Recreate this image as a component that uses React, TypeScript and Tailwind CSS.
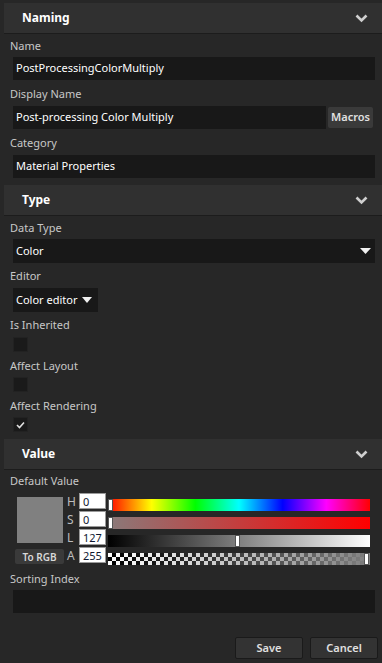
import React from "react";

const font = { fontFamily: '"Segoe UI", "Noto Sans", "Open Sans", sans-serif' };

function Chevron() {
  return (
    <svg width="13" height="9" viewBox="0 0 13 9" className="text-[#cfcfcf]">
      <path d="M1.5 1.5 L6.5 6.5 L11.5 1.5" fill="none" stroke="currentColor" strokeWidth="2.6" />
    </svg>
  );
}

function Header({ title, mt }: { title: string; mt: string }) {
  return (
    <div className={`${mt} ml-[4px] h-[31px] bg-[#303030] border-b border-[#1c1c1c] flex items-center justify-between pl-[18px] pr-[14px]`}>
      <span className="text-[12px] font-bold text-white">{title}</span>
      <Chevron />
    </div>
  );
}

function Label({ text, mt }: { text: string; mt: string }) {
  return <div className={`${mt} pl-[10px] h-[16px] leading-[15px] text-[11px] text-[#c8c8c8]`}>{text}</div>;
}

function Input({ value, mt, w = "w-[362px]" }: { value?: string; mt: string; w?: string }) {
  return (
    <div className={`${mt} ml-[13px] ${w} h-[23px] bg-[#181818] flex items-center px-[3px] text-[11px] text-white whitespace-nowrap`}>
      {value}
    </div>
  );
}

function Checkbox({ checked, mt }: { checked?: boolean; mt: string }) {
  return (
    <div className={`${mt} ml-[13px] w-[15px] h-[15px] bg-[#1a1a1a] border border-[#222] flex items-center justify-center`}>
      {checked && (
        <svg width="9" height="8" viewBox="0 0 9 8">
          <path d="M1 4 L3.5 6.5 L8 1.5" fill="none" stroke="#e0e0e0" strokeWidth="1.6" />
        </svg>
      )}
    </div>
  );
}

function Handle({ left }: { left: string }) {
  return <div className={`absolute top-0 ${left} w-[5px] h-[12px] bg-white border border-[#555]`} />;
}

function NumBox({ value }: { value: string }) {
  return (
    <div className="w-[27px] h-[16px] bg-white border border-[#9a9a9a] flex items-center pl-[3px] text-[11px] text-[#101830] leading-none">
      {value}
    </div>
  );
}

export default function App() {
  const checker = {
    backgroundColor: "#ffffff",
    backgroundImage:
      "linear-gradient(to right, rgba(128,128,128,0), rgba(128,128,128,1)), conic-gradient(#000 25%, #fff 0 50%, #000 0 75%, #fff 0)",
    backgroundSize: "100% 100%, 8px 8px",
  };

  return (
    <div style={font} className="w-[382px] h-[663px] bg-[#272727] flex flex-col pt-[3px] overflow-hidden">
      <Header title="Naming" mt="mt-0" />
      <Label text="Name" mt="mt-[4px]" />
      <Input value="PostProcessingColorMultiply" mt="mt-[3px]" />
      <Label text="Display Name" mt="mt-[6px]" />
      <div className="mt-[4px] flex items-center">
        <Input value="Post-processing Color Multiply" mt="mt-0" w="w-[313px]" />
        <button className="ml-[2px] w-[45px] h-[21px] bg-[#3a3a3a] rounded-[2px] text-[11px] text-[#e0e0e0] font-semibold flex items-center justify-center">
          Macros
        </button>
      </div>
      <Label text="Category" mt="mt-[6px]" />
      <Input value="Material Properties" mt="mt-[4px]" />

      <Header title="Type" mt="mt-[7px]" />
      <Label text="Data Type" mt="mt-[4px]" />
      <div className="mt-[3px] ml-[13px] w-[362px] h-[24px] bg-[#181818] flex items-center justify-between px-[3px] text-[11px] text-white">
        <span>Color</span>
        <svg width="11" height="6" viewBox="0 0 11 6" className="mr-[1px]">
          <path d="M0 0 H11 L5.5 6 Z" fill="#f0f0f0" />
        </svg>
      </div>
      <Label text="Editor" mt="mt-[5px]" />
      <div className="mt-[4px] ml-[13px] w-[85px] h-[24px] bg-[#181818] flex items-center gap-[5px] px-[3px] text-[11px] text-white whitespace-nowrap">
        <span>Color editor</span>
        <svg width="10" height="6" viewBox="0 0 10 6">
          <path d="M0 0 H10 L5 6 Z" fill="#f0f0f0" />
        </svg>
      </div>
      <Label text="Is Inherited" mt="mt-[5px]" />
      <Checkbox mt="mt-[4px]" />
      <Label text="Affect Layout" mt="mt-[6px]" />
      <Checkbox mt="mt-[3px]" />
      <Label text="Affect Rendering" mt="mt-[6px]" />
      <Checkbox checked mt="mt-[3px]" />

      <Header title="Value" mt="mt-[7px]" />
      <Label text="Default Value" mt="mt-[3px]" />
      <div className="mt-[4px] flex">
        <div className="ml-[15px] w-[49px] flex flex-col items-center">
          <div className="mt-[4px] w-[46px] h-[46px] bg-[#808080]" />
          <button className="mt-[6px] w-[49px] h-[15px] bg-[#3a3a3a] rounded-[2px] text-[10px] text-[#d8d8d8] font-semibold leading-none flex items-center justify-center">
            To RGB
          </button>
        </div>
        <div className="ml-[3px] w-[12px] flex flex-col text-[12px] text-[#bcbcbc] leading-[18px]">
          <span>H</span>
          <span>S</span>
          <span>L</span>
          <span>A</span>
        </div>
        <div className="flex flex-col gap-[2px]">
          <NumBox value="0" />
          <NumBox value="0" />
          <NumBox value="127" />
          <NumBox value="255" />
        </div>
        <div className="ml-[2px] w-[262px] flex flex-col gap-[6px] pt-[6px]">
          <div className="relative h-[12px] bg-[linear-gradient(to_right,#ff0000,#ffff00,#00ff00,#00ffff,#0000ff,#ff00ff,#ff0000)]">
            <Handle left="left-0" />
          </div>
          <div className="relative h-[12px] bg-[linear-gradient(to_right,#8a7a7a,#ff0000)]">
            <Handle left="left-0" />
          </div>
          <div className="relative h-[12px] bg-[linear-gradient(to_right,#000000,#ffffff)]">
            <Handle left="left-[127px]" />
          </div>
          <div className="relative h-[12px]" style={checker}>
            <Handle left="left-[256px]" />
          </div>
        </div>
      </div>

      <Label text="Sorting Index" mt="mt-[6px]" />
      <Input mt="mt-[3px]" />

      <div className="mt-[24px] flex justify-end gap-[7px] pr-[4px]">
        <button className="w-[68px] h-[22px] bg-[#333333] border border-[#1a1a1a] rounded-[2px] text-[11px] text-[#e0e0e0] font-semibold">
          Save
        </button>
        <button className="w-[68px] h-[22px] bg-[#333333] border border-[#1a1a1a] rounded-[2px] text-[11px] text-[#e0e0e0] font-semibold">
          Cancel
        </button>
      </div>
    </div>
  );
}
